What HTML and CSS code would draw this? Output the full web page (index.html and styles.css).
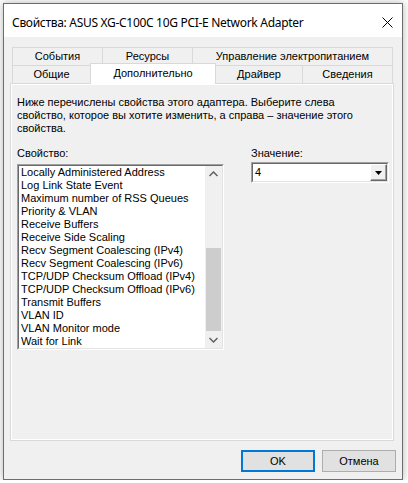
FILE: index.html
```html
<!DOCTYPE html>
<html lang="ru">
<head>
<meta charset="utf-8">
<title>Свойства</title>
<link rel="stylesheet" href="styles.css">
</head>
<body>
<div class="window">
  <div class="titlebar">
    <span class="title">Свойства: ASUS XG-C100C 10G PCI-E Network Adapter</span>
    <svg class="close" width="11" height="11" viewBox="0 0 11 11"><path d="M0.5 0.5 L10.5 10.5 M10.5 0.5 L0.5 10.5" stroke="#000" stroke-width="1" fill="none"/></svg>
  </div>
  <div class="client">
    <div class="tabs">
      <div class="tabrow">
        <div class="tab t-events">События</div>
        <div class="tab t-res">Ресурсы</div>
        <div class="tab t-power last">Управление электропитанием</div>
      </div>
      <div class="tabrow">
        <div class="tab t-general">Общие</div>
        <div class="tab t-adv active">Дополнительно</div>
        <div class="tab t-driver noleft">Драйвер</div>
        <div class="tab t-info last">Сведения</div>
      </div>
    </div>
    <div class="panel">
      <p class="desc">Ниже перечислены свойства этого адаптера. Выберите слева<br>свойство, которое вы хотите изменить, а справа – значение этого<br>свойства.</p>
      <div class="fields">
        <div class="col-left">
          <div class="label">Свойство:</div>
          <div class="listbox">
            <div class="listbox-inner">
              <div class="items">
                <div class="item">Locally Administered Address</div>
                <div class="item">Log Link State Event</div>
                <div class="item">Maximum number of RSS Queues</div>
                <div class="item">Priority &amp; VLAN</div>
                <div class="item">Receive Buffers</div>
                <div class="item">Receive Side Scaling</div>
                <div class="item">Recv Segment Coalescing (IPv4)</div>
                <div class="item">Recv Segment Coalescing (IPv6)</div>
                <div class="item">TCP/UDP Checksum Offload (IPv4)</div>
                <div class="item">TCP/UDP Checksum Offload (IPv6)</div>
                <div class="item">Transmit Buffers</div>
                <div class="item">VLAN ID</div>
                <div class="item">VLAN Monitor mode</div>
                <div class="item">Wait for Link</div>
              </div>
              <div class="scrollbar">
                <div class="sb-btn"><svg width="17" height="17" viewBox="0 0 17 17"><polyline points="4.5,10 8.5,6 12.5,10" fill="none" stroke="#606060" stroke-width="1.5"/></svg></div>
                <div class="sb-track"><div class="sb-thumb"></div></div>
                <div class="sb-btn"><svg width="17" height="17" viewBox="0 0 17 17"><polyline points="4.5,7 8.5,11 12.5,7" fill="none" stroke="#606060" stroke-width="1.5"/></svg></div>
              </div>
            </div>
          </div>
        </div>
        <div class="col-right">
          <div class="label">Значение:</div>
          <div class="combo">
            <div class="combo-inner">
              <span class="combo-value">4</span>
              <div class="combo-btn"><svg width="7" height="4" viewBox="0 0 7 4"><polygon points="0,0 7,0 3.5,4" fill="#000"/></svg></div>
            </div>
          </div>
        </div>
      </div>
    </div>
    <div class="buttons">
      <button class="btn ok">OK</button>
      <button class="btn">Отмена</button>
    </div>
  </div>
</div>
</body>
</html>
```
FILE: styles.css
```css
* { box-sizing: border-box; }
body {
  margin: 0;
  padding: 3px 0 0 3px;
  background: #ffffff;
  font-family: "Liberation Sans", Arial, sans-serif;
  font-size: 11px;
  color: #000;
}
.window {
  width: 400px;
  height: 477px;
  border: 1px solid #6d6d6d;
  background: #f0f0f0;
  box-shadow: 0 0 8px rgba(0,0,0,0.3);
  display: flex;
  flex-direction: column;
}
.titlebar {
  height: 33px;
  flex: none;
  background: #fff;
  display: flex;
  align-items: flex-start;
  padding-left: 8px;
}
.title {
  font-family: "Noto Sans", "Open Sans", sans-serif;
  font-size: 12px;
  letter-spacing: -0.3px;
  line-height: 16px;
  margin-top: 11px;
  white-space: nowrap;
}
.close {
  margin-left: auto;
  margin-right: 9px;
  margin-top: 13px;
}
.client {
  flex: 1;
  padding: 10px 0 0 6px;
}
.tabs { margin-left: 2px; width: 381px; }
.tabrow {
  display: flex;
  height: 18px;
  align-items: flex-start;
}
.tab {
  height: 18px;
  border-top: 1px solid #d9d9d9;
  border-left: 1px solid #d9d9d9;
  background: #f0f0f0;
  text-align: center;
  line-height: 17px;
  white-space: nowrap;
}
.tab.last { border-right: 1px solid #d9d9d9; }
.tab.noleft { border-left: none; }
.t-events { width: 90px; }
.t-res { width: 90px; }
.t-power { width: 201px; }
.t-general { width: 78px; }
.t-adv { width: 126px; }
.t-driver { width: 86px; }
.t-info { width: 91px; }
.tab.active {
  background: #fff;
  border-right: 1px solid #d9d9d9;
  height: 21px;
  margin-top: -2px;
  margin-bottom: -1px;
  line-height: 18px;
  position: relative;
  z-index: 1;
}
.panel {
  width: 384px;
  height: 358px;
  border: 1px solid #d9d9d9;
  box-shadow: inset 0 0 0 1px #fff;
  padding: 12px 0 0 6px;
}
.desc { margin: 0; line-height: 13px; white-space: nowrap; }
.fields { display: flex; margin-top: 12px; }
.col-left { width: 207px; }
.col-right { width: 138px; margin-left: 27px; }
.label { line-height: 13px; }
.listbox {
  margin-top: 4px;
  height: 186px;
  border: 1px solid;
  border-color: #a0a0a0 #ffffff #ffffff #a0a0a0;
}
.listbox-inner {
  height: 100%;
  border: 1px solid;
  border-color: #696969 #e3e3e3 #e3e3e3 #696969;
  background: #fff;
  display: flex;
}
.items { flex: 1; padding-left: 2px; overflow: hidden; }
.item { line-height: 13px; height: 13px; white-space: nowrap; }
.scrollbar {
  width: 17px;
  flex: none;
  background: #f0f0f0;
  display: flex;
  flex-direction: column;
}
.sb-btn { height: 17px; flex: none; }
.sb-btn svg { display: block; }
.sb-track {
  flex: 1;
  display: flex;
  flex-direction: column;
  justify-content: flex-end;
}
.sb-thumb { height: 83px; margin: 0 1px; background: #cdcdcd; }
.combo {
  margin-top: 2px;
  height: 21px;
  border: 1px solid;
  border-color: #a0a0a0 #ffffff #ffffff #a0a0a0;
}
.combo-inner {
  height: 100%;
  border: 1px solid;
  border-color: #696969 #e3e3e3 #e3e3e3 #696969;
  background: #fff;
  display: flex;
  align-items: stretch;
}
.combo-value { flex: 1; padding-left: 2px; line-height: 16px; }
.combo-btn {
  width: 17px;
  background: #f0f0f0;
  border: 1px solid;
  border-color: #ffffff #696969 #696969 #ffffff;
  box-shadow: inset -1px -1px 0 #a0a0a0;
  display: flex;
  align-items: center;
  justify-content: center;
}
.combo-btn svg { display: block; }
.buttons {
  display: flex;
  justify-content: flex-end;
  gap: 7px;
  margin-top: 9px;
  padding-right: 6px;
}
.btn {
  width: 74px;
  height: 22px;
  padding: 0;
  background: #e1e1e1;
  border: 1px solid #adadad;
  font-family: "Liberation Sans", Arial, sans-serif;
  font-size: 11px;
  color: #000;
}
.btn.ok { border: 2px solid #0078d7; }
```
